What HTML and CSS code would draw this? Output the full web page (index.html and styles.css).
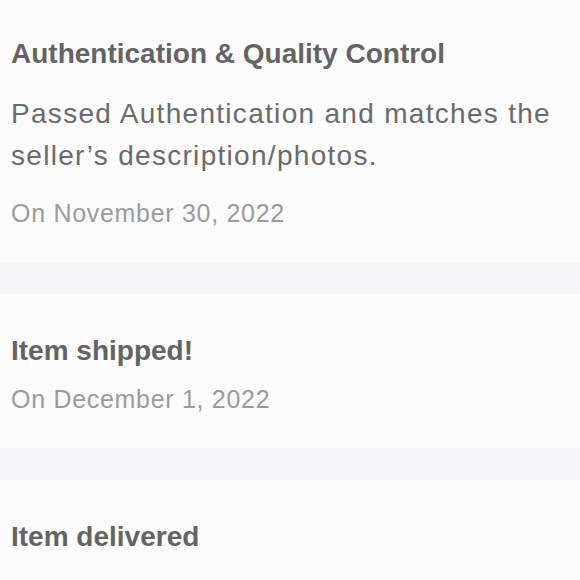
FILE: index.html
```html
<!DOCTYPE html>
<html lang="en">
<head>
<meta charset="utf-8">
<title>Order timeline</title>
<link rel="stylesheet" href="styles.css">
</head>
<body>
<main class="timeline">
  <section class="event event-first">
    <h2 class="event-title">Authentication &amp; Quality Control</h2>
    <p class="event-desc">Passed Authentication and matches the seller’s description/photos.</p>
    <p class="event-date">On November 30, 2022</p>
  </section>
  <div class="divider"></div>
  <section class="event">
    <h2 class="event-title">Item shipped!</h2>
    <p class="event-date">On December 1, 2022</p>
  </section>
  <div class="divider"></div>
  <section class="event">
    <h2 class="event-title">Item delivered</h2>
  </section>
</main>
</body>
</html>
```

FILE: styles.css
```css
html, body {
  margin: 0;
  padding: 0;
  background: #fcfcfc;
}
body {
  font-family: "Liberation Sans", Arial, sans-serif;
  color: #666;
}
.timeline {
  display: flex;
  flex-direction: column;
}
.event {
  padding: 40px 11px 33px;
  display: flex;
  flex-direction: column;
}
.event-first {
  padding-top: 37px;
}
.event-title {
  margin: 0;
  font-size: 28px;
  font-weight: 700;
  line-height: 34px;
  color: #646464;
}
.event-desc {
  margin: 22px 0 5px;
  font-size: 28px;
  line-height: 42px;
  letter-spacing: 1.3px;
  color: #6b6b6b;
}
.event-date {
  margin: 15px 0 0;
  font-size: 25px;
  line-height: 32px;
  letter-spacing: 0.7px;
  color: #9b9b9b;
}
.divider {
  height: 32px;
  background: #f5f6f8;
}
```
